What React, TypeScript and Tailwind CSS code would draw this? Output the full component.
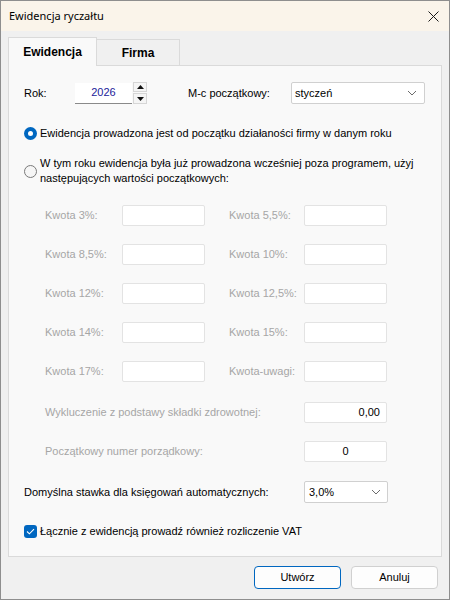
import React from "react";

const Chevron = () => (
  <svg width="10" height="6" viewBox="0 0 10 6" className="shrink-0">
    <path d="M1 1 L5 5 L9 1" fill="none" stroke="#6b6b6b" strokeWidth="1" />
  </svg>
);

const Field = ({ value = "", align = "right" }: { value?: string; align?: string }) => (
  <div
    className={`w-[83px] h-[21px] bg-white border border-[#e3e3e3] rounded-[2px] flex items-center px-[6px] text-[11px] text-black ${
      align === "center" ? "justify-center" : "justify-end"
    }`}
  >
    {value}
  </div>
);

const kwoty: [string, string][] = [
  ["Kwota 3%:", "Kwota 5,5%:"],
  ["Kwota 8,5%:", "Kwota 10%:"],
  ["Kwota 12%:", "Kwota 12,5%:"],
  ["Kwota 14%:", "Kwota 15%:"],
  ["Kwota 17%:", "Kwota-uwagi:"],
];

export default function App() {
  return (
    <div
      className="w-[450px] h-[600px] border border-[#8e8e8e] bg-[#f0f0f0] flex flex-col text-[11px] text-black"
      style={{ fontFamily: '"Liberation Sans", Arial, sans-serif' }}
    >
      {/* Title bar */}
      <div className="h-[30px] bg-[#faf4ea] flex items-center justify-between pl-[8px] pr-[10px] shrink-0">
        <span className="text-[11px] text-black pt-[1px]" style={{ fontFamily: '"Noto Sans", "Liberation Sans", sans-serif' }}>
          Ewidencja ryczałtu
        </span>
        <svg width="11" height="11" viewBox="0 0 11 11">
          <path d="M0.5 0.5 L10.5 10.5 M10.5 0.5 L0.5 10.5" stroke="#1a1a1a" strokeWidth="1" />
        </svg>
      </div>

      <div className="px-[7px] flex flex-col">
        {/* Tabs */}
        <div className="mt-[6px] h-[28px] flex items-end">
          <div className="relative z-10 w-[89px] h-[29px] -mb-px bg-[#f9f9f9] border-l border-t border-r border-[#dadada] flex items-center justify-center font-bold text-[12px] pb-[1px]">
            Ewidencja
          </div>
          <div className="w-[83px] h-[26px] bg-[#f0f0f0] border-t border-r border-[#dadada] flex items-center justify-center font-bold text-[12px] pt-[1px]">
            Firma
          </div>
        </div>

        {/* Panel */}
        <div className="w-[434px] h-[492px] bg-[#f9f9f9] border border-[#dadada] flex flex-col pl-[15px]">
          {/* Rok row */}
          <div className="mt-[16px] h-[22px] flex items-center">
            <span className="w-[51px]">Rok:</span>
            <div className="w-[57px] h-[21px] bg-white border-b border-[#8a8a8a] flex items-center justify-center text-[#22229a]">
              2026
            </div>
            <div className="ml-[1px] w-[14px] h-[22px] flex flex-col gap-[1px]">
              <div className="h-[10px] border border-[#d6d6d6] bg-[#f5f5f5] flex items-center justify-center">
                <svg width="7" height="4" viewBox="0 0 7 4">
                  <path d="M0 4 L3.5 0 L7 4 Z" fill="#111" />
                </svg>
              </div>
              <div className="h-[11px] border border-[#d6d6d6] bg-[#f5f5f5] flex items-center justify-center">
                <svg width="7" height="4" viewBox="0 0 7 4">
                  <path d="M0 0 L3.5 4 L7 0 Z" fill="#111" />
                </svg>
              </div>
            </div>
            <span className="ml-[41px] w-[103px]">M-c początkowy:</span>
            <div className="w-[134px] h-[22px] bg-white border border-[#d0d0d0] rounded-[2px] flex items-center justify-between pl-[3px] pr-[7px]">
              <span>styczeń</span>
              <Chevron />
            </div>
          </div>

          {/* Radio 1 */}
          <div className="mt-[22px] h-[15px] flex items-center">
            <div className="w-[13px] h-[13px] rounded-full bg-[#0067c0] flex items-center justify-center shrink-0">
              <div className="w-[5px] h-[5px] rounded-full bg-white" />
            </div>
            <span className="ml-[3px] whitespace-nowrap">
              Ewidencja prowadzona jest od początku działaności firmy w danym roku
            </span>
          </div>

          {/* Radio 2 */}
          <div className="mt-[15px] flex items-center">
            <div className="w-[13px] h-[13px] rounded-full border border-[#7a7a7a] bg-[#f6f6f6] shrink-0" />
            <span className="ml-[3px] leading-[15px] whitespace-nowrap">
              W tym roku ewidencja była już prowadzona wcześniej poza programem, użyj
              <br />
              następujących wartości początkowych:
            </span>
          </div>

          {/* Kwoty grid */}
          <div className="mt-[19px] ml-[21px] flex flex-col gap-[18px]">
            {kwoty.map(([a, b]) => (
              <div key={a} className="h-[21px] flex items-center">
                <span className="w-[77px] text-[#a6a6a6]">{a}</span>
                <Field />
                <span className="ml-[24px] w-[75px] text-[#a6a6a6] whitespace-nowrap">{b}</span>
                <Field />
              </div>
            ))}
          </div>

          {/* Wykluczenie */}
          <div className="mt-[20px] ml-[21px] h-[21px] flex items-center">
            <span className="w-[259px] text-[#a6a6a6]">Wykluczenie z podstawy składki zdrowotnej:</span>
            <Field value="0,00" />
          </div>

          {/* Początkowy numer */}
          <div className="mt-[18px] ml-[21px] h-[21px] flex items-center">
            <span className="w-[259px] text-[#a6a6a6]">Początkowy numer porządkowy:</span>
            <Field value="0" align="center" />
          </div>

          {/* Domyślna stawka */}
          <div className="mt-[19px] h-[22px] flex items-center">
            <span className="w-[280px]">Domyślna stawka dla księgowań automatycznych:</span>
            <div className="w-[84px] h-[22px] bg-white border border-[#d0d0d0] rounded-[2px] flex items-center justify-between pl-[4px] pr-[6px]">
              <span>3,0%</span>
              <Chevron />
            </div>
          </div>

          {/* Checkbox */}
          <div className="mt-[21px] h-[15px] flex items-center">
            <div className="w-[13px] h-[13px] rounded-[3px] bg-[#0067c0] flex items-center justify-center shrink-0">
              <svg width="9" height="7" viewBox="0 0 9 7">
                <path d="M1 3.5 L3.4 5.8 L8 1.2" fill="none" stroke="white" strokeWidth="1.1" />
              </svg>
            </div>
            <span className="ml-[3px] whitespace-nowrap">Łącznie z ewidencją prowadź również rozliczenie VAT</span>
          </div>
        </div>

        {/* Buttons */}
        <div className="mt-[9px] flex justify-end gap-[10px] pr-[4px]">
          <button className="w-[87px] h-[23px] bg-[#fdfdfd] border border-[#0067c0] rounded-[4px] flex items-center justify-center text-[11px]">
            Utwórz
          </button>
          <button className="w-[87px] h-[23px] bg-[#fdfdfd] border border-[#d0d0d0] rounded-[4px] flex items-center justify-center text-[11px]">
            Anuluj
          </button>
        </div>
      </div>
    </div>
  );
}
